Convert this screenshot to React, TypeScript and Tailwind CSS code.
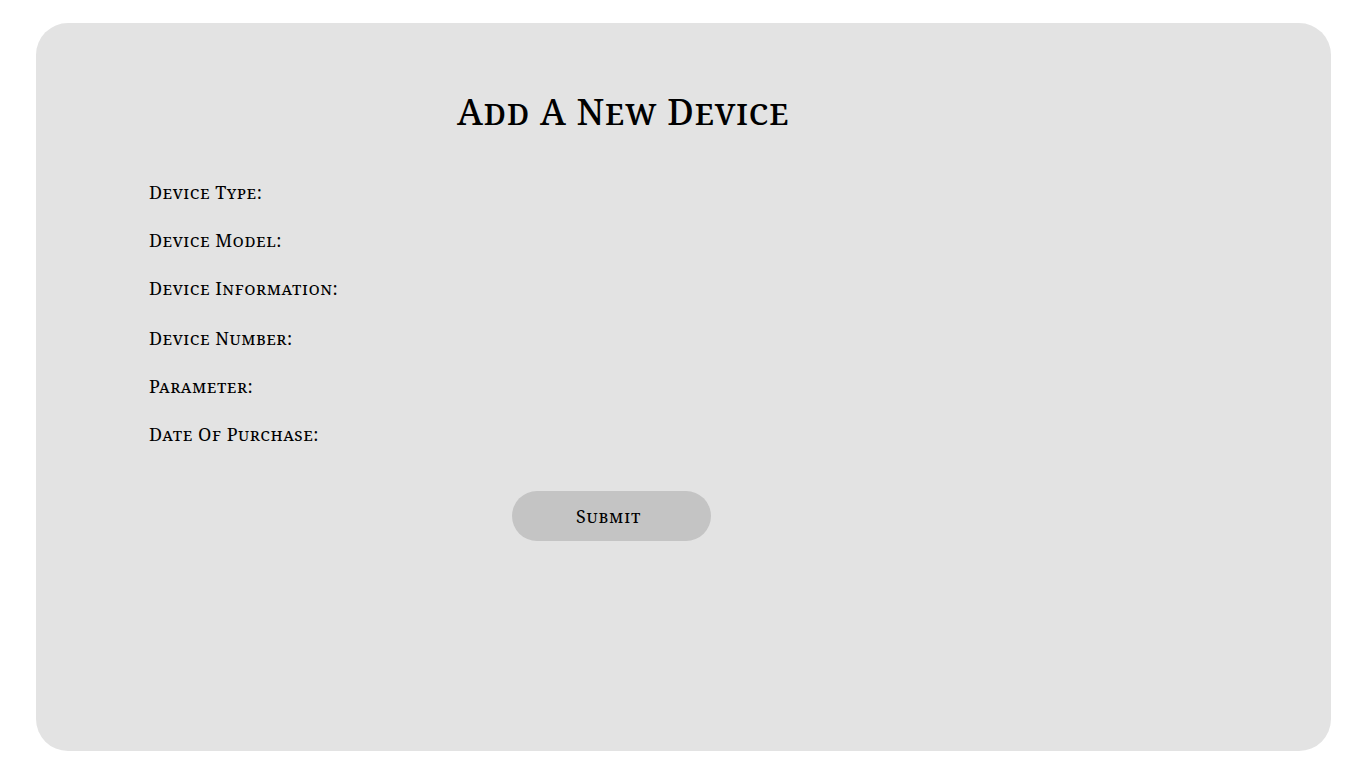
const fields = [
  "Device Type:",
  "Device Model:",
  "Device Information:",
  "Device Number:",
  "Parameter:",
  "Date Of Purchase:",
];

export default function App() {
  return (
    <div className="min-h-screen bg-white pt-[23px] pl-[36px] font-['Noto_Serif',serif] text-black [font-variant-caps:small-caps]">
      <div className="w-[1295px] h-[728px] rounded-[32px] bg-[#e3e3e3] flex flex-col">
        <h1 className="mt-[67px] ml-[421px] w-fit text-[36px] leading-[44px] tracking-[0.6px] font-medium">Add A New Device</h1>
        <form className="mt-[46px] ml-[113px] flex flex-col" onSubmit={e => e.preventDefault()}>
          {fields.map((f, i) => (
            <label key={f} className={`block text-[18px] leading-[24px] tracking-[0.5px] ${i === 3 ? "mt-[26px]" : i === 0 ? "" : "mt-[24px]"}`}>
              {f}
            </label>
          ))}
          <button
            type="submit"
            className="mt-[45px] ml-[363px] w-[199px] h-[50px] rounded-full bg-[#c4c4c4] text-[18px] leading-[24px] tracking-[0.8px] pr-[6px]"
          >
            Submit
          </button>
        </form>
      </div>
    </div>
  );
}
